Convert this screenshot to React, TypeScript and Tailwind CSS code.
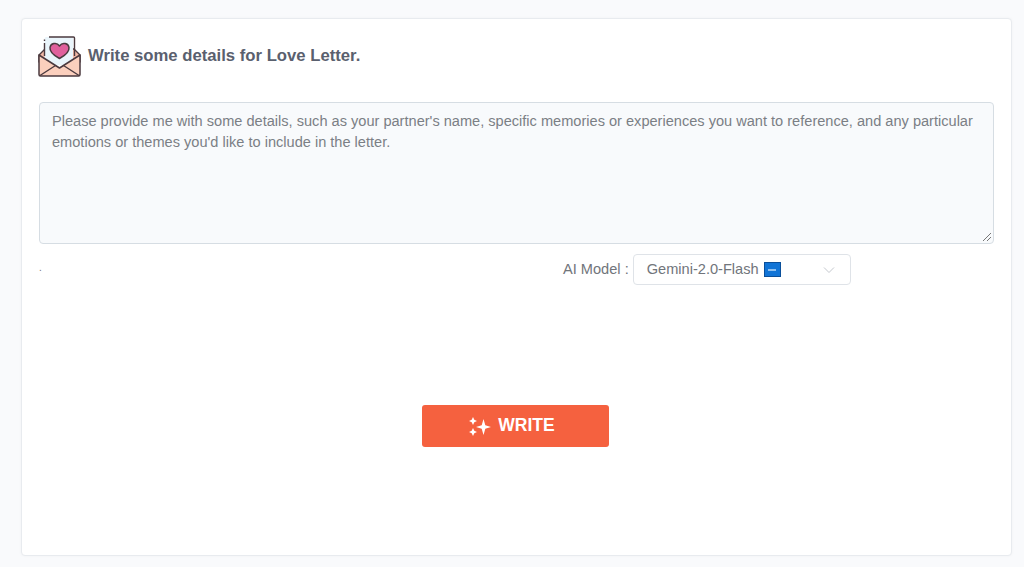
export default function App() {
  return (
    <div className="h-[567px] w-[1024px] overflow-hidden bg-[#f9fafc] pt-[18px] pr-[12px] pb-[11px] pl-[21px] font-['Liberation_Sans',Arial,sans-serif]">
      <div className="flex h-full flex-col rounded-[4px] border border-[#e8ebef] bg-white pt-[17px] pr-[17px] pl-[17px] shadow-[0_0_3px_rgba(0,0,0,0.04)]">
        <div className="-ml-[1px] flex h-[42px] items-center gap-[7px]">
          <svg width="43" height="42" viewBox="0 0 43 42" className="shrink-0">
            <path d="M1 19 L7 13 L36 13 L42 19 L42 26 L1 26 Z" fill="#f3b9a6" stroke="#4b3a3f" strokeWidth="1.4" strokeLinejoin="round" />
            <path d="M6.5 3 Q6.5 1 8.5 1 L35 1 L35 29 L6.5 29 Z" fill="#eaf5fb" />
            <path d="M11 1 L35.5 1 Q36.5 1 36.5 2 L36.5 20 M6.5 7 L6.5 20 M6.5 3.5 L6.5 5" fill="none" stroke="#4b3a3f" strokeWidth="1.4" />
            <path d="M21.5 22.5 C15 19 11.5 15.5 12 11.5 C12.5 7.5 18.5 5.5 21.5 10 C24.5 5.5 30.5 7.5 31 11.5 C31.5 15.5 28 19 21.5 22.5 Z" fill="#e0609c" stroke="#4b3a3f" strokeWidth="1.5" strokeLinejoin="round" />
            <path d="M1 19 L21.5 32 L42 19 L42 38.5 Q42 40 40.5 40 L2.5 40 Q1 40 1 38.5 Z" fill="#fbcfbd" stroke="#4b3a3f" strokeWidth="1.5" strokeLinejoin="round" />
            <path d="M2 39.5 L17.5 29.5 M41 39.5 L25.5 29.5" fill="none" stroke="#4b3a3f" strokeWidth="1.4" />
          </svg>
          <span className="pb-[2px] text-[16.7px] leading-[20px] font-bold text-[#5a606e]">Write some details for Love Letter.</span>
        </div>
        <div className="relative mt-[24px] h-[142px] w-[955px] rounded-[4px] border border-[#d6dde3] bg-[#f8fafc] px-[12px] py-[8px] text-[14.59px] leading-[21px] text-[#7b7f85]">
          Please provide me with some details, such as your partner's name, specific memories or experiences you want to reference, and any particular emotions or themes you'd like to include in the letter.
          <svg width="10" height="10" viewBox="0 0 10 10" className="absolute right-[1px] bottom-[1px]">
            <path d="M1 9 L9 1 M5 9 L9 5" stroke="#777" strokeWidth="1" />
          </svg>
        </div>
        <div className="mt-[10px] flex h-[31px] items-center">
          <span className="-mt-[3px] w-[524px] text-[10px] leading-none text-[#777]">.</span>
          <span className="text-[14.6px] text-[#71757b]">AI Model :</span>
          <div className="ml-[4px] flex h-[31px] w-[218px] items-center rounded-[4px] border border-[#dfe3e8] bg-white pr-[15px] pl-[13px] text-[14.6px] text-[#71757b]">
            <span>Gemini-2.0-Flash</span>
            <span className="ml-[5px] flex h-[15px] w-[17px] items-center justify-center bg-[#1174d6] shadow-[inset_0_0_0_1px_#0a4f9a]">
              <span className="block h-[2px] w-[8px] bg-[#8fc0ee]"></span>
            </span>
            <svg width="12" height="12" viewBox="0 0 12 12" className="ml-auto">
              <path d="M1 3.5 L6 8.5 L11 3.5" fill="none" stroke="#c4c8ce" strokeWidth="1" />
            </svg>
          </div>
        </div>
        <div className="mt-[120px] flex justify-start">
          <button className="ml-[383px] flex h-[42px] w-[187px] items-center justify-center gap-[7px] rounded-[3px] bg-[#f5613f] pr-[7px] text-[17.5px] font-bold text-white">
            <svg width="22" height="22" viewBox="0 0 22 22" className="mt-[2px]">
              <path d="M14.5 3 L16.3 9.2 L22 11 L16.3 12.8 L14.5 19 L12.7 12.8 L7 11 L12.7 9.2 Z" fill="white" />
              <path d="M4 1 L5.3 3.7 L8 5 L5.3 6.3 L4 9 L2.7 6.3 L0 5 L2.7 3.7 Z" fill="white" />
              <path d="M4 12 L5.3 14.7 L8 16 L5.3 17.3 L4 20 L2.7 17.3 L0 16 L2.7 14.7 Z" fill="white" />
            </svg>
            <span className="pb-[2px]">WRITE</span>
          </button>
        </div>
      </div>
    </div>
  );
}
